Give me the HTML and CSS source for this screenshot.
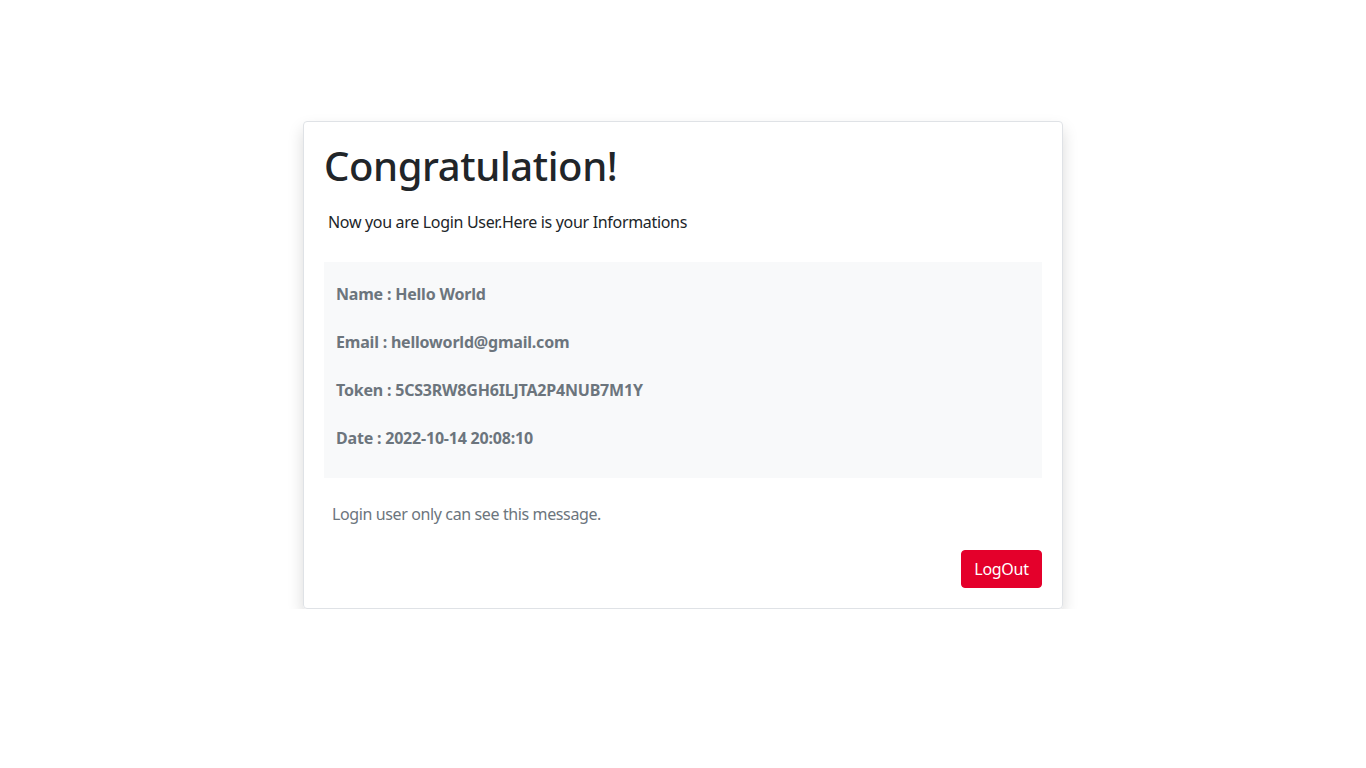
FILE: index.html
```html
<!DOCTYPE html>
<html lang="en">
<head>
<meta charset="utf-8">
<title>Congratulation</title>
<link rel="stylesheet" href="styles.css">
</head>
<body>
<main class="page">
  <section class="card">
    <h1 class="title">Congratulation!</h1>
    <p class="lead">Now you are Login User.Here is your Informations</p>
    <div class="info">
      <p class="info-row">Name : Hello World</p>
      <p class="info-row">Email : helloworld@gmail.com</p>
      <p class="info-row">Token : 5CS3RW8GH6ILJTA2P4NUB7M1Y</p>
      <p class="info-row">Date : 2022-10-14 20:08:10</p>
    </div>
    <p class="note">Login user only can see this message.</p>
    <div class="actions">
      <button class="btn-logout" type="button">LogOut</button>
    </div>
  </section>
</main>
</body>
</html>
```

FILE: styles.css
```css
* { box-sizing: border-box; }
html, body { margin: 0; padding: 0; background: #fff; }
body {
  font-family: "Noto Sans", "Open Sans", sans-serif;
  font-size: 16px;
  color: #212529;
}
.page {
  display: flex;
  justify-content: center;
  padding-top: 121px;
}
.card {
  width: 760px;
  border: 1px solid #dfe2e6;
  border-radius: 4px;
  box-shadow: 0 8px 16px rgba(0,0,0,0.15);
  padding: 20px;
  display: flex;
  flex-direction: column;
}
.title {
  margin: 0;
  font-size: 40px;
  font-weight: 500;
  line-height: 48px;
  letter-spacing: -0.4px;
  color: #212529;
}
.lead {
  margin: 20px 0 0 4px;
  line-height: 24px;
  letter-spacing: -0.32px;
}
.info {
  margin-top: 28px;
  background: #f8f9fa;
  padding: 20px 12px 4px;
}
.info-row {
  margin: 0 0 24px;
  line-height: 24px;
  font-weight: 700;
  color: #6c757d;
  letter-spacing: -0.2px;
}
.note {
  margin: 24px 0 0 8px;
  line-height: 24px;
  color: #6c757d;
  letter-spacing: -0.38px;
}
.actions {
  display: flex;
  justify-content: flex-end;
  margin-top: 24px;
}
.btn-logout {
  font-family: inherit;
  font-size: 16px;
  line-height: 24px;
  color: #fff;
  background: #e4002b;
  border: 1px solid #e4002b;
  border-radius: 4px;
  padding: 6px 12px;
  width: 81px;
  cursor: pointer;
  letter-spacing: -0.3px;
}
```
